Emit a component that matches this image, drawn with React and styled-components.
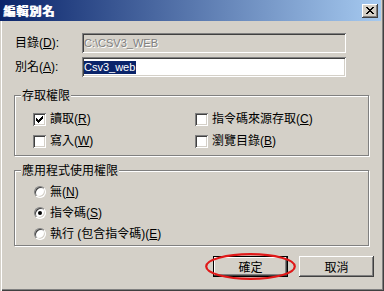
import React from "react";
import styled, { createGlobalStyle } from "styled-components";

const Global = createGlobalStyle`
  html, body { margin: 0; padding: 0; background: #d4d0c8; }
  body { font-family: "Liberation Sans", "Noto Sans CJK TC", sans-serif; }
`;

const Window = styled.div`
  width: 384px;
  height: 291px;
  box-sizing: border-box;
  background: #d4d0c8;
  box-shadow: inset 1px 0 #d4d0c8, inset 2px 0 #fff, inset -1px -1px #404040,
    inset -2px -2px #808080;
  display: flex;
  flex-direction: column;
  font-family: "Liberation Sans", "Noto Sans CJK TC", sans-serif;
  font-size: 12px;
  color: #000;
  overflow: hidden;
`;

const TitleBar = styled.div`
  height: 21px;
  margin-right: 3px;
  box-sizing: border-box;
  background: linear-gradient(to right, #0a246a, #a6caf0);
  display: flex;
  align-items: center;
  justify-content: space-between;
  padding: 0 3px;
`;

const Title = styled.span`
  color: #fff;
  font-weight: bold;
  font-size: 12px;
  letter-spacing: 1px;
  line-height: 15px;
  text-shadow: 1px 0 0 #fff;
  font-family: "Noto Sans CJK TC", sans-serif;
`;

const CloseButton = styled.div`
  width: 16px;
  height: 14px;
  box-sizing: border-box;
  background: #d4d0c8;
  box-shadow: inset -1px -1px #404040, inset 1px 1px #fff, inset -2px -2px #808080;
  display: flex;
  align-items: center;
  justify-content: center;
`;

const Body = styled.div`
  flex: 1;
  display: flex;
  flex-direction: column;
  padding: 12px 10px 0 14px;
`;

const FieldRow = styled.div`
  display: flex;
  align-items: center;
  height: 20px;
  padding-left: 1px;
  margin-top: ${(p) => p.$mt || 0}px;
`;

const Label = styled.span`
  width: 67px;
  line-height: 14px;
  white-space: nowrap;
`;

const TextBox = styled.div`
  width: 264px;
  height: 20px;
  box-sizing: border-box;
  background: ${(p) => (p.$disabled ? "#d4d0c8" : "#fff")};
  box-shadow: inset 1px 1px #808080, inset -1px -1px #fff, inset 2px 2px #404040,
    inset -2px -2px #d4d0c8;
  padding-left: 2px;
  display: flex;
  align-items: center;
  font-family: "Liberation Sans", sans-serif;
  font-size: 11px;
  color: ${(p) => (p.$disabled ? "#808080" : "#000")};
  text-shadow: ${(p) => (p.$disabled ? "1px 1px #fff" : "none")};
`;

const Selected = styled.span`
  background: #0a246a;
  color: #fff;
  line-height: 13px;
  padding: 0 1px 0 0;
`;

const Group = styled.div`
  position: relative;
  width: 355px;
  height: ${(p) => p.$h}px;
  box-sizing: border-box;
  border: 1px solid #808080;
  box-shadow: inset 1px 1px #fff, 1px 1px #fff;
  margin-top: ${(p) => p.$mt}px;
  padding: ${(p) => p.$pt}px 0 0 18px;
`;

const GroupTitle = styled.span`
  position: absolute;
  top: -7px;
  left: 6px;
  padding: 0 1px;
  background: #d4d0c8;
  line-height: 14px;
  white-space: nowrap;
`;

const OptionGrid = styled.div`
  display: grid;
  grid-template-columns: ${(p) => p.$cols};
  grid-auto-rows: ${(p) => p.$row}px;
`;

const Option = styled.label`
  display: flex;
  align-items: center;
  gap: 4px;
  line-height: 14px;
  white-space: nowrap;
`;

const CheckBox = styled.span`
  width: 13px;
  height: 13px;
  box-sizing: border-box;
  background: #fff;
  box-shadow: inset 1px 1px #808080, inset -1px -1px #fff, inset 2px 2px #404040,
    inset -2px -2px #d4d0c8;
  display: flex;
  align-items: center;
  justify-content: center;
`;

const RadioSlot = styled.span`
  width: 13px;
  height: 12px;
  display: flex;
  justify-content: flex-end;
`;

const Radio = styled.span`
  width: 12px;
  height: 12px;
  box-sizing: border-box;
  border-radius: 50%;
  background: #fff;
  border: 1px solid;
  border-color: #808080 #fff #fff #808080;
  box-shadow: inset 1px 1px #404040, inset -1px -1px #d4d0c8;
  display: flex;
  align-items: center;
  justify-content: center;
`;

const Dot = styled.span`
  width: 4px;
  height: 4px;
  border-radius: 50%;
  background: #000;
`;

const ButtonRow = styled.div`
  display: flex;
  justify-content: flex-end;
  gap: 11px;
  margin-top: 10px;
`;

const ButtonWrap = styled.div`
  position: relative;
`;

const Button = styled.div`
  width: 75px;
  height: 21px;
  box-sizing: border-box;
  background: #d4d0c8;
  border: ${(p) => (p.$default ? "1px solid #000" : "0")};
  box-shadow: inset -1px -1px #404040, inset 1px 1px #fff, inset -2px -2px #808080;
  display: flex;
  align-items: center;
  justify-content: center;
  font-family: "Noto Sans CJK TC", sans-serif;
  font-size: 12px;
  line-height: 14px;
`;

const Ellipse = styled.svg`
  position: absolute;
  left: -8px;
  top: -3px;
  pointer-events: none;
`;

const CloseIcon = () => (
  <svg width="8" height="7" viewBox="0 0 8 7" shapeRendering="crispEdges">
    <path
      d="M0 0h2v1H0zM6 0h2v1H6zM1 1h2v1H1zM5 1h2v1H5zM2 2h4v1H2zM3 3h2v1H3zM2 4h4v1H2zM1 5h2v1H1zM5 5h2v1H5zM0 6h2v1H0zM6 6h2v1H6z"
      fill="#000"
    />
  </svg>
);

const CheckMark = () => (
  <svg width="7" height="7" viewBox="0 0 7 7" shapeRendering="crispEdges">
    <path
      d="M0 2h1v3H0zM1 3h1v3H1zM2 4h1v3H2zM3 3h1v3H3zM4 2h1v3H4zM5 1h1v3H5zM6 0h1v3H6z"
      fill="#000"
    />
  </svg>
);

const CheckOption = ({ checked, children }) => (
  <Option>
    <CheckBox>{checked && <CheckMark />}</CheckBox>
    <span>{children}</span>
  </Option>
);

const RadioOption = ({ checked, children }) => (
  <Option>
    <RadioSlot>
      <Radio>{checked && <Dot />}</Radio>
    </RadioSlot>
    <span>{children}</span>
  </Option>
);

export default function App() {
  return (
    <>
      <Global />
      <Window>
        <TitleBar>
          <Title>編輯別名</Title>
          <CloseButton>
            <CloseIcon />
          </CloseButton>
        </TitleBar>
        <Body>
          <FieldRow>
            <Label>
              目錄(<u>D</u>):
            </Label>
            <TextBox $disabled>C:\CSV3_WEB</TextBox>
          </FieldRow>
          <FieldRow $mt={4}>
            <Label>
              別名(<u>A</u>):
            </Label>
            <TextBox>
              <Selected>Csv3_web</Selected>
            </TextBox>
          </FieldRow>

          <Group $h={61} $mt={18} $pt={12}>
            <GroupTitle>存取權限</GroupTitle>
            <OptionGrid $cols="162px 1fr" $row={22}>
              <CheckOption checked>
                讀取(<u>R</u>)
              </CheckOption>
              <CheckOption>
                指令碼來源存取(<u>C</u>)
              </CheckOption>
              <CheckOption>
                寫入(<u>W</u>)
              </CheckOption>
              <CheckOption>
                瀏覽目錄(<u>B</u>)
              </CheckOption>
            </OptionGrid>
          </Group>

          <Group $h={76} $mt={14} $pt={10}>
            <GroupTitle>應用程式使用權限</GroupTitle>
            <OptionGrid $cols="1fr" $row={21}>
              <RadioOption>
                無(<u>N</u>)
              </RadioOption>
              <RadioOption checked>
                指令碼(<u>S</u>)
              </RadioOption>
              <RadioOption>
                執行 (包含指令碼)(<u>E</u>)
              </RadioOption>
            </OptionGrid>
          </Group>

          <ButtonRow>
            <ButtonWrap>
              <Button $default>確定</Button>
              <Ellipse width="91" height="27" viewBox="0 0 91 27">
                <ellipse cx="45.5" cy="13.5" rx="44.3" ry="12.3" fill="none" stroke="#e01818" strokeWidth="2.2" />
              </Ellipse>
            </ButtonWrap>
            <ButtonWrap>
              <Button>取消</Button>
            </ButtonWrap>
          </ButtonRow>
        </Body>
      </Window>
    </>
  );
}
